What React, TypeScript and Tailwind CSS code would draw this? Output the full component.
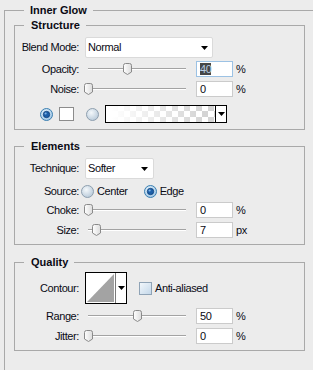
import React from 'react'

const font = { fontFamily: '"Liberation Sans", Arial, sans-serif' }

function Arrow() {
  return (
    <svg width="7" height="4" viewBox="0 0 7 4">
      <path d="M0 0 H7 L3.5 4 Z" fill="#000" />
    </svg>
  )
}

function Radio({ checked }: { checked?: boolean }) {
  return (
    <svg width="13" height="13" viewBox="0 0 13 13" className="shrink-0">
      <defs>
        <radialGradient id={checked ? 'rc' : 'ru'} cx="0.4" cy="0.35" r="0.7">
          <stop offset="0" stopColor={checked ? '#e8f4fc' : '#f4f8fb'} />
          <stop offset="1" stopColor={checked ? '#9cc4e4' : '#b6c8d8'} />
        </radialGradient>
      </defs>
      <circle cx="6.5" cy="6.5" r="6" fill={`url(#${checked ? 'rc' : 'ru'})`} stroke={checked ? '#3c7fb1' : '#8e9fae'} />
      {checked && <circle cx="6.5" cy="6.5" r="3.2" fill="#1d5fa8" stroke="#0d3f7a" strokeWidth="0.8" />}
      {checked && <circle cx="5.6" cy="5.5" r="1.1" fill="#7fb6ea" />}
    </svg>
  )
}

function Thumb() {
  return (
    <svg width="9" height="12" viewBox="0 0 9 12">
      <defs>
        <linearGradient id="tg" x1="0" y1="0" x2="1" y2="0">
          <stop offset="0" stopColor="#ffffff" />
          <stop offset="1" stopColor="#dcdcdc" />
        </linearGradient>
      </defs>
      <path d="M0.5 2.5 Q0.5 0.5 2.5 0.5 H6.5 Q8.5 0.5 8.5 2.5 V9 L4.5 11.5 L0.5 9 Z" fill="url(#tg)" stroke="#8a8a8a" />
    </svg>
  )
}

function Slider({ pos }: { pos: number }) {
  return (
    <div className="relative w-[112px] h-[16px] flex items-center">
      <div className="ml-[4px] w-[98px] h-[2px] border-t border-[#a3a3a3] bg-white" />
      <div className="absolute top-[2px]" style={{ left: pos }}>
        <Thumb />
      </div>
    </div>
  )
}

function Field({ value, unit, focused }: { value: string; unit: string; focused?: boolean }) {
  return (
    <div className="flex items-center">
      <div
        className={`w-[37px] h-[16px] bg-white border flex items-center pl-[3px] ${
          focused ? 'border-[#9cc2e4]' : 'border-[#cbcbcb]'
        }`}
      >
        {focused ? <span className="bg-[#464646] text-[#b9cbe0] leading-[12px]">{value}</span> : <span>{value}</span>}
      </div>
      <span className="ml-[3px]">{unit}</span>
    </div>
  )
}

function Label({ children }: { children: React.ReactNode }) {
  return <div className="w-[64px] shrink-0 text-right whitespace-nowrap">{children}</div>
}

function SliderRow({ label, pos, value, unit, focused, className }: { label: string; pos: number; value: string; unit: string; focused?: boolean; className?: string }) {
  return (
    <div className={`flex items-center h-[16px] ${className}`}>
      <Label>{label}</Label>
      <div className="ml-[5px]">
        <Slider pos={pos} />
      </div>
      <Field value={value} unit={unit} focused={focused} />
    </div>
  )
}

function Group({ title, className, children }: { title: string; className?: string; children: React.ReactNode }) {
  return (
    <fieldset className={`w-[291px] border border-[#a9a9a9] ${className}`}>
      <legend className="ml-[9px] pl-[7px] pr-[6px] font-bold leading-[14px] tracking-normal">{title}</legend>
      {children}
    </fieldset>
  )
}

export default function App() {
  return (
    <div className="w-[313px] h-[370px] overflow-hidden bg-[#ececec] text-[11px] tracking-[-0.4px] text-[#0a0a14]" style={font}>
      <fieldset className="mt-[3px] ml-[4px] w-[340px] min-h-[400px] border border-[#a9a9a9] pl-[9px]">
        <legend className="ml-[10px] px-[6px] font-bold leading-[14px] tracking-normal">Inner Glow</legend>

        {/* Structure */}
        <Group title="Structure" className="mt-[1px] pb-[6px]">
          <div className="flex items-center h-[21px] mt-[5px]">
            <Label>Blend Mode:</Label>
            <div className="ml-[6px] w-[128px] h-[21px] bg-white border border-[#dadada] rounded-[2px] flex items-center justify-between pl-[2px] pr-[4px]">
              <span>Normal</span>
              <Arrow />
            </div>
          </div>
          <SliderRow label="Opacity:" pos={39} value="40" unit="%" focused className="mt-[3px]" />
          <SliderRow label="Noise:" pos={0} value="0" unit="%" className="mt-[4px]" />
          <div className="flex items-center h-[18px] mt-[8px]">
            <div className="ml-[25px]">
              <Radio checked />
            </div>
            <div className="ml-[6px] w-[15px] h-[14px] bg-white border border-[#8c8c8c]" />
            <div className="ml-[12px]">
              <Radio />
            </div>
            <div className="ml-[6px] w-[122px] h-[18px] border border-black flex bg-white">
              <div className="flex-1 bg-[repeating-conic-gradient(#d4d4d4_0%_25%,#ffffff_0%_50%)] bg-[length:12px_12px] bg-[position:0_-1px]">
                <div className="w-full h-full bg-gradient-to-r from-white from-5% to-transparent to-90%" />
              </div>
              <div className="w-[11px] border-l border-black bg-white flex items-center justify-center">
                <Arrow />
              </div>
            </div>
          </div>
        </Group>

        {/* Elements */}
        <Group title="Elements" className="mt-[9px] pb-[6px]">
          <div className="flex items-center h-[21px] mt-[5px]">
            <Label>Technique:</Label>
            <div className="ml-[6px] w-[69px] h-[21px] bg-white border border-[#dadada] rounded-[2px] flex items-center justify-between pl-[2px] pr-[5px]">
              <span>Softer</span>
              <Arrow />
            </div>
          </div>
          <div className="flex items-center h-[14px] mt-[5px]">
            <Label>Source:</Label>
            <div className="ml-[2px]">
              <Radio />
            </div>
            <span className="ml-[3px]">Center</span>
            <div className="ml-[16px]">
              <Radio checked />
            </div>
            <span className="ml-[3px]">Edge</span>
          </div>
          <SliderRow label="Choke:" pos={0} value="0" unit="%" className="mt-[4px]" />
          <SliderRow label="Size:" pos={8} value="7" unit="px" className="mt-[4px]" />
        </Group>

        {/* Quality */}
        <Group title="Quality" className="mt-[10px] pb-[6px]">
          <div className="flex items-center h-[32px] mt-[3px]">
            <Label>Contour:</Label>
            <div className="ml-[6px] w-[42px] h-[32px] border border-black bg-white flex">
              <div className="w-[29px] h-full p-[1px]">
                <svg width="27" height="28" viewBox="0 0 27 28">
                  <path d="M0 28 L27 0 V28 Z" fill="#a3a3a3" />
                </svg>
              </div>
              <div className="flex-1 border-l border-[#7a7a7a] flex items-center justify-center">
                <Arrow />
              </div>
            </div>
            <div className="ml-[12px] w-[13px] h-[13px] border border-[#8fa3b6] bg-gradient-to-br from-[#f2f7fb] to-[#c4d8ea]" />
            <span className="ml-[3px]">Anti-aliased</span>
          </div>
          <SliderRow label="Range:" pos={49} value="50" unit="%" className="mt-[4px]" />
          <SliderRow label="Jitter:" pos={0} value="0" unit="%" className="mt-[4px]" />
        </Group>
      </fieldset>
    </div>
  )
}
